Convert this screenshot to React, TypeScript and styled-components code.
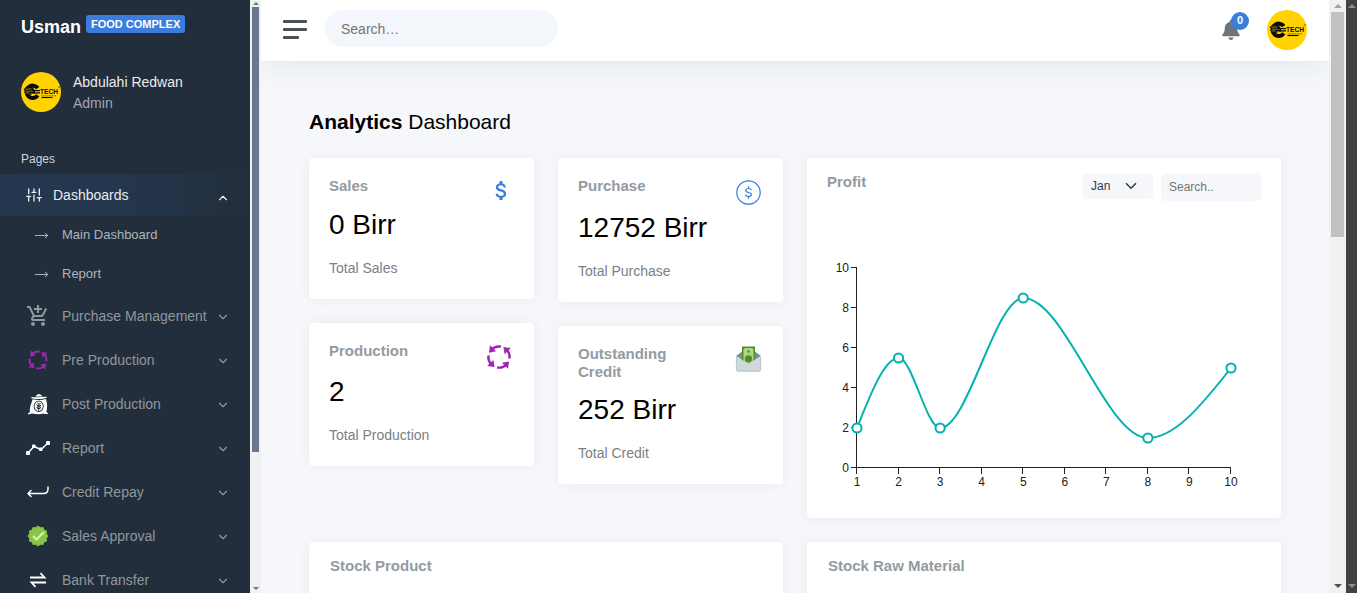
import React from "react";
import styled, { createGlobalStyle } from "styled-components";
import { FiSliders, FiChevronDown, FiChevronUp } from "react-icons/fi";
import { MdAddShoppingCart, MdAttachMoney } from "react-icons/md";
import { FcProcess, FcApproval } from "react-icons/fc";
import { GiFlour } from "react-icons/gi";
import { FaBell } from "react-icons/fa";

const GlobalStyle = createGlobalStyle`
  *, *::before, *::after { box-sizing: border-box; }
  body {
    margin: 0;
    background: #f5f7fb;
    font-family: "Liberation Sans", Arial, sans-serif;
    font-size: 14px;
    line-height: 21px;
    color: #000;
  }
  h1, h2, p, ul { margin: 0; padding: 0; }
  ul { list-style: none; }
  button, input, select { font-family: inherit; margin: 0; border: 0; }
  a { text-decoration: none; color: inherit; }
`;

const Page = styled.div`
  display: flex;
  height: 100vh;
  overflow: hidden;
`;

const Sidebar = styled.aside`
  flex: 0 0 250px;
  overflow: hidden;
  background: #222e3c;
`;

const Brand = styled.a`
  display: flex;
  align-items: flex-start;
  gap: 5px;
  padding: 15px 21px 0;
  height: 51px;
`;

const BrandName = styled.span`
  color: #fff;
  font-size: 18px;
  font-weight: 700;
  line-height: 24px;
`;

const BrandBadge = styled.span`
  padding: 0 5px;
  border-radius: 3px;
  background: #3b7ddd;
  color: #fff;
  font-size: 11px;
  font-weight: 700;
  line-height: 18px;
`;

const User = styled.div`
  display: flex;
  align-items: flex-start;
  gap: 12px;
  padding: 21px;
`;

const UserName = styled.a`
  display: block;
  color: #e9ecef;
`;

const UserRole = styled.span`
  color: #a1a7af;
`;

const NavHeading = styled.p`
  padding: 14px 21px 4px;
  color: #ced4da;
  font-size: 12px;
`;

const NavButton = styled.button<{ $active?: boolean }>`
  display: flex;
  align-items: center;
  gap: ${(p) => (p.$active ? 11 : 12)}px;
  width: 100%;
  height: ${(p) => (p.$active ? 42 : 44)}px;
  padding: 0 20px 0 26px;
  background: ${(p) =>
    p.$active
      ? "linear-gradient(90deg, rgba(59,125,221,.12), rgba(59,125,221,.1) 50%, transparent)"
      : "transparent"};
  color: ${(p) => (p.$active ? "#e9ecef" : "#90979d")};
  font-size: 14px;
  line-height: 21px;
  text-align: left;
  cursor: pointer;
`;

const NavIcon = styled.span<{ $color?: string }>`
  display: flex;
  flex: none;
  color: ${(p) => p.$color ?? "#fff"};
`;

const NavLabel = styled.span`
  flex: 1;
  min-width: 0;
  white-space: nowrap;
`;

const NavChevron = styled.span<{ $open?: boolean }>`
  display: flex;
  flex: none;
  margin-left: -4px;
  padding-top: ${(p) => (p.$open ? 6 : 2)}px;
`;

const SubLink = styled.a`
  display: flex;
  align-items: center;
  gap: 13px;
  padding: 8px 21px 10px 35px;
  color: #adb5bd;
  font-size: 13px;
`;

const Track = styled.div<{ $width: number; $bg: string }>`
  display: flex;
  flex: 0 0 ${(p) => p.$width}px;
  flex-direction: column;
  align-items: center;
  background: ${(p) => p.$bg};
`;

const Thumb = styled.div<{ $share: number; $bg: string }>`
  align-self: stretch;
  flex: 0 0 ${(p) => p.$share}%;
  margin: 0 2px;
  background: ${(p) => p.$bg};
`;

const TrackArrow = styled.span<{ $down?: boolean; $size: number; $pad: number; $color: string }>`
  width: 0;
  height: 0;
  margin: ${(p) => (p.$down ? `auto 0 ${p.$pad}px` : `${p.$pad}px 0 ${p.$pad}px`)};
  border: ${(p) => p.$size}px solid transparent;
  border-${(p) => (p.$down ? "bottom" : "top")}-width: 0;
  border-${(p) => (p.$down ? "top" : "bottom")}-color: ${(p) => p.$color};
`;

const Main = styled.div`
  flex: 1;
  min-width: 0;
  overflow-x: hidden;
  overflow-y: auto;
  scrollbar-width: none;
`;

const TopBar = styled.header`
  display: flex;
  align-items: center;
  height: 61px;
  padding: 0 22px;
  background: #fff;
  box-shadow: 0 0 32px rgba(33, 37, 41, 0.1);
`;

const MenuButton = styled.button`
  display: flex;
  flex-direction: column;
  gap: 5px;
  width: 24px;
  margin: 0 18px 3px 0;
  padding: 0;
  background: none;
  cursor: pointer;
`;

const MenuBar = styled.span<{ $short?: boolean }>`
  width: ${(p) => (p.$short ? 16 : 24)}px;
  height: 3px;
  border-radius: 1px;
  background: #495057;
`;

const TopSearch = styled.input`
  width: 233px;
  height: 37px;
  margin-bottom: 4px;
  padding: 0 16px;
  border-radius: 19px;
  background: #f3f6fb;
  font-size: 14px;

  &::placeholder { color: #757575; opacity: 1; }
`;

const TopActions = styled.div`
  display: flex;
  align-items: center;
  gap: 26px;
  margin: 0 0 2px auto;
`;

const BellButton = styled.button`
  position: relative;
  display: flex;
  padding: 0;
  background: none;
  color: #6c757d;
  cursor: pointer;
`;

const BellCount = styled.span`
  position: absolute;
  top: -8px;
  right: -8px;
  width: 18px;
  height: 18px;
  border-radius: 50%;
  background: #3b7ddd;
  color: #fff;
  font-size: 11px;
  font-weight: 700;
  line-height: 17px;
  text-align: center;
`;

const Content = styled.main`
  padding: 48px;
`;

const PageTitle = styled.h1`
  margin-bottom: 24px;
  font-size: 21px;
  font-weight: 400;
  line-height: 25px;
`;

const Columns = styled.div`
  display: grid;
  grid-template-columns: 1fr 1fr;
  gap: 24px;
  align-items: start;
`;

const Stack = styled.div`
  display: grid;
  gap: 24px;
`;

const Card = styled.section`
  min-width: 0;
  padding: 19px 20px 20px;
  border-radius: 4px;
  background: #fff;
  box-shadow: 0 0 14px rgba(33, 37, 41, 0.05);
`;

const ChartCard = styled(Card)`
  padding: 0;
`;

const StockCard = styled(Card)`
  min-height: 300px;
  padding: 15px 21px;
`;

const CardTitle = styled.h2`
  padding-bottom: 8px;
  color: #939ba2;
  font-size: 15px;
  font-weight: 700;
  line-height: 18px;
`;

const StatHead = styled.div`
  display: flex;
  justify-content: space-between;
  gap: 24px;
`;

const StatIcon = styled.span<{ $height: number }>`
  display: flex;
  align-items: center;
  flex: none;
  height: ${(p) => p.$height}px;
`;

const StatValue = styled.p`
  margin: 4px 0 16px;
  font-size: 28px;
  line-height: 34px;
`;

const StatCaption = styled.p`
  color: #7b8086;
`;

const ChartHead = styled.div`
  display: flex;
  align-items: flex-start;
  gap: 8px;
  height: 60px;
  padding: 15px 20px 0;
`;

const ChartTitle = styled(CardTitle)`
  flex: 1;
`;

const SelectBox = styled.div`
  position: relative;
  margin-top: 1px;
`;

const MonthSelect = styled.select`
  appearance: none;
  display: block;
  width: 70px;
  height: 25px;
  padding: 0 8px 2px;
  border-radius: 3px;
  background: #f5f7fb;
  color: #343a40;
  font-size: 12px;
`;

const SelectArrow = styled.svg`
  position: absolute;
  top: 8px;
  right: 16px;
  pointer-events: none;
`;

const ChartSearch = styled.input`
  width: 100px;
  height: 27px;
  margin-top: 1px;
  padding: 0 8px 2px;
  border-radius: 4px;
  background: #f5f7fb;
  font-size: 12px;

  &::placeholder { color: #757575; opacity: 1; }
`;

const ChartSvg = styled.svg`
  display: block;
  width: 100%;
  height: auto;

  text {
    font-family: "Liberation Sans", Arial, sans-serif;
    font-size: 12px;
    fill: #212121;
  }
`;

function Logo() {
  return (
    <svg width="40" height="40" viewBox="0 0 40 40" role="img" aria-label="E-Tech">
      <circle cx="20" cy="20" r="20" fill="#ffd200" />
      <path
        d="M16.800 16.200A6.200 6.200 0 1 0 16.800 23.400"
        fill="none"
        stroke="#0b0b05"
        strokeWidth="4"
      />
      <path d="M2.500 17.500L5.500 14.500L11 14.500L14 18.500V21.500H9.500L11 23L6 22L3 20.500L4.500 19Z" fill="#0b0b05" />
      <path d="M4.500 17.300L10.500 16.800M5 19.200H13M4.500 20.800L8.500 21.200" stroke="#ffd200" strokeWidth=".6" />
      <path d="M11 18.600H19M12 20.900H19" stroke="#0b0b05" strokeWidth="1.300" />
      <text
        x="19"
        y="22.400"
        fontFamily="Liberation Sans, Arial, sans-serif"
        fontSize="6.600"
        fontWeight="700"
        fill="#0b0b05"
      >
        TECH
      </text>
      <path d="M20.500 23.800H35" stroke="#0b0b05" strokeWidth=".6" strokeDasharray="1 .5" />
      <path d="M20.500 25.500H31.500" stroke="#0b0b05" strokeWidth="1.100" />
      <circle cx="38" cy="15" r=".8" fill="none" stroke="#6b5a00" strokeWidth=".5" />
    </svg>
  );
}

function SubArrow() {
  return (
    <svg width="14" height="14" viewBox="0 0 14 14" fill="none" stroke="#adb5bd" aria-hidden="true">
      <path d="M0 7.500H12.500M10 5L12.800 7.500L10 10" />
    </svg>
  );
}

function TrendIcon() {
  return (
    <svg width="24" height="24" viewBox="0 0 24 24" fill="none">
      <path d="M2 17L8 10.500L15 13.500L22 7" stroke="#fff" strokeWidth="1.500" />
      <g fill="#fff">
        <rect x="0" y="15" width="4" height="4" rx="1" />
        <rect x="6" y="8.500" width="3.500" height="3.500" rx="1" />
        <rect x="13" y="11.500" width="3.500" height="3.500" rx="1" />
        <rect x="20" y="5" width="4" height="4" rx="1" />
      </g>
    </svg>
  );
}

function ReturnIcon() {
  return (
    <svg width="24" height="24" viewBox="0 0 24 24" fill="none" stroke="#fff" strokeWidth="1.500" strokeLinecap="round" strokeLinejoin="round">
      <path d="M22 7V9C22 11.500 20.500 13.500 17.500 13.500H2M5 10.500L2 13.500L5 16.500" />
    </svg>
  );
}

function TransferIcon() {
  return (
    <svg width="24" height="24" viewBox="0 0 24 24" fill="none" stroke="#fff" strokeWidth="1.800">
      <path d="M4 9.500H18.500L14.500 5.200M20 14.500H5.500L9.500 18.800" />
    </svg>
  );
}

function CoinIcon() {
  return (
    <svg width="30" height="30" viewBox="0 0 30 30" fill="none" stroke="#3b7ddd" strokeWidth="1.200">
      <circle cx="15.500" cy="15.500" r="11.700" />
      <path
        transform="translate(.5 .5)"
        d="M15 8.800V11M15 19V21.200M17.900 12.600C17.700 11.600 16.700 11 15.200 11C13.400 11 12.300 11.800 12.300 13C12.300 14.200 13.200 14.600 15 15C16.900 15.400 17.900 15.900 17.900 17.100C17.900 18.300 16.800 19.100 15 19.100C13.300 19.100 12.200 18.400 12 17.200"
      />
    </svg>
  );
}

function CashEnvelopeIcon() {
  return (
    <svg width="30" height="30" viewBox="0 0 30 30">
      <path d="M3 12L9 7.500H22L28 12L15.500 20Z" fill="#78909c" />
      <path d="M9 2.500H22V19H9Z" fill="#558b2f" />
      <path d="M12 4H19L20.500 5.500V17.500L15.500 20.500L10.500 17.500V5.500Z" fill="#aed581" />
      <circle cx="15.500" cy="7.500" r="1.300" fill="#558b2f" />
      <circle cx="15.500" cy="14.800" r="3.600" fill="#558b2f" />
      <path d="M3 12L15.500 20L28 12V25.500A2 2 0 0 1 26 27.500H5A2 2 0 0 1 3 25.500Z" fill="#cfd8dc" />
      <path d="M3.400 12.500V25.500A1.600 1.600 0 0 0 5 27.100H26A1.600 1.600 0 0 0 27.600 25.500V12.500" fill="none" stroke="#b0bec5" strokeWidth=".8" />
    </svg>
  );
}

type Point = [number, number];

const profit: Point[] = [[1, 2], [2, 5.5], [3, 2], [5, 8.5], [8, 1.5], [10, 5]];
const xTicks = [1, 2, 3, 4, 5, 6, 7, 8, 9, 10];
const yTicks = [0, 2, 4, 6, 8, 10];
const sx = (v: number) => 50 + ((v - 1) * 374) / 9;
const sy = (v: number) => 250 - v * 20;

/* Monotone cubic interpolation through the points. */
function monotonePath(points: Point[]) {
  const n = points.length;
  const slope = points.slice(1).map((p, i) => (p[1] - points[i][1]) / (p[0] - points[i][0]));
  const tangent = points.map((_, i) => {
    if (i === 0 || i === n - 1) return 0;
    const h0 = points[i][0] - points[i - 1][0];
    const h1 = points[i + 1][0] - points[i][0];
    const s0 = slope[i - 1];
    const s1 = slope[i];
    const p = (s0 * h1 + s1 * h0) / (h0 + h1);
    return (Math.sign(s0) + Math.sign(s1)) * Math.min(Math.abs(s0), Math.abs(s1), 0.5 * Math.abs(p)) || 0;
  });
  tangent[0] = (3 * slope[0] - tangent[1]) / 2;
  tangent[n - 1] = (3 * slope[n - 2] - tangent[n - 2]) / 2;
  return points.slice(1).reduce((d, [x1, y1], i) => {
    const [x0, y0] = points[i];
    const dx = (x1 - x0) / 3;
    return `${d}C${x0 + dx},${y0 + dx * tangent[i]},${x1 - dx},${y1 - dx * tangent[i + 1]},${x1},${y1}`;
  }, `M${points[0][0]},${points[0][1]}`);
}

function ProfitChart() {
  const points = profit.map(([x, y]): Point => [sx(x), sy(y)]);
  return (
    <ChartSvg viewBox="0 0 474 300" role="img" aria-label="Profit by period">
      <g stroke="#212121" shapeRendering="crispEdges" transform="translate(-.5 -.5)">
        <path d="M50 50V250M50 250H424" fill="none" />
        {yTicks.map((t) => <line key={t} x1="44" x2="50" y1={sy(t)} y2={sy(t)} />)}
        {xTicks.map((t) => <line key={t} x1={sx(t)} x2={sx(t)} y1="250" y2="256" />)}
      </g>
      {yTicks.map((t) => <text key={t} x="42" y={sy(t) + 4} textAnchor="end">{t}</text>)}
      {xTicks.map((t) => <text key={t} x={sx(t)} y="268" textAnchor="middle">{t}</text>)}
      <path d={monotonePath(points)} fill="none" stroke="#02b2af" strokeWidth="2" />
      {points.map(([x, y]) => (
        <circle key={x} cx={x} cy={y} r="4.600" fill="#fff" stroke="#02b2af" strokeWidth="2" />
      ))}
    </ChartSvg>
  );
}

const navItems = [
  { label: "Purchase Management", icon: <MdAddShoppingCart size={24} />, color: "#90979d" },
  { label: "Pre Production", icon: <FcProcess size={24} /> },
  { label: "Post Production", icon: <GiFlour size={24} /> },
  { label: "Report", icon: <TrendIcon /> },
  { label: "Credit Repay", icon: <ReturnIcon /> },
  { label: "Sales Approval", icon: <FcApproval size={24} /> },
  { label: "Bank Transfer", icon: <TransferIcon /> },
];

interface StatProps {
  title: string;
  value: string;
  caption: string;
  icon: React.ReactNode;
  iconHeight: number;
}

function Stat({ title, value, caption, icon, iconHeight }: StatProps) {
  return (
    <Card>
      <StatHead>
        <CardTitle>{title}</CardTitle>
        <StatIcon $height={iconHeight}>{icon}</StatIcon>
      </StatHead>
      <StatValue>{value}</StatValue>
      <StatCaption>{caption}</StatCaption>
    </Card>
  );
}

export default function App() {
  return (
    <Page>
      <GlobalStyle />
      <Sidebar>
        <Brand href="#">
          <BrandName>Usman</BrandName>
          <BrandBadge>FOOD COMPLEX</BrandBadge>
        </Brand>
        <User>
          <Logo />
          <div>
            <UserName href="#">Abdulahi Redwan</UserName>
            <UserRole>Admin</UserRole>
          </div>
        </User>
        <nav>
          <NavHeading>Pages</NavHeading>
          <NavButton $active aria-expanded="true">
            <NavIcon $color="#e9ecef"><FiSliders size={16} strokeWidth={2} /></NavIcon>
            <NavLabel>Dashboards</NavLabel>
            <NavChevron $open><FiChevronUp size={14} /></NavChevron>
          </NavButton>
          <ul>
            <li><SubLink href="#"><SubArrow />Main Dashboard</SubLink></li>
            <li><SubLink href="#"><SubArrow />Report</SubLink></li>
          </ul>
          {navItems.map((item) => (
            <NavButton key={item.label} aria-expanded="false">
              <NavIcon $color={item.color}>{item.icon}</NavIcon>
              <NavLabel>{item.label}</NavLabel>
              <NavChevron><FiChevronDown size={14} /></NavChevron>
            </NavButton>
          ))}
        </nav>
      </Sidebar>
      <Track $width={11} $bg="#f1f1f1" aria-hidden="true">
        <TrackArrow $size={3} $pad={2} $color="#68788f" />
        <Thumb $share={75} $bg="#68788f" />
        <TrackArrow $down $size={3} $pad={3} $color="#68788f" />
      </Track>
      <Main>
        <TopBar>
          <MenuButton aria-label="Toggle sidebar">
            <MenuBar />
            <MenuBar />
            <MenuBar $short />
          </MenuButton>
          <TopSearch type="text" placeholder="Search…" aria-label="Search" />
          <TopActions>
            <BellButton aria-label="Notifications">
              <FaBell size={20} />
              <BellCount>0</BellCount>
            </BellButton>
            <Logo />
          </TopActions>
        </TopBar>
        <Content>
          <PageTitle><strong>Analytics</strong> Dashboard</PageTitle>
          <Columns>
            <Columns>
              <Stack>
                <Stat title="Sales" value="0 Birr" caption="Total Sales" iconHeight={27} icon={<MdAttachMoney size={25} color="#3b7ddd" />} />
                <Stat title="Production" value="2" caption="Total Production" iconHeight={29} icon={<FcProcess size={30} />} />
              </Stack>
              <Stack>
                <Stat title="Purchase" value="12752 Birr" caption="Total Purchase" iconHeight={30} icon={<CoinIcon />} />
                <Stat title="Outstanding Credit" value="252 Birr" caption="Total Credit" iconHeight={27} icon={<CashEnvelopeIcon />} />
              </Stack>
            </Columns>
            <ChartCard>
              <ChartHead>
                <ChartTitle>Profit</ChartTitle>
                <SelectBox>
                  <MonthSelect aria-label="Month" defaultValue="Jan">
                    <option>Jan</option>
                    <option>Feb</option>
                    <option>Mar</option>
                  </MonthSelect>
                  <SelectArrow width="12" height="8" viewBox="0 0 12 8" fill="none" stroke="#343a40" strokeWidth="1.500">
                    <path d="M1 1.200L6 6.200L11 1.200" />
                  </SelectArrow>
                </SelectBox>
                <ChartSearch type="text" placeholder="Search.." aria-label="Search profit" />
              </ChartHead>
              <ProfitChart />
            </ChartCard>
            <StockCard><CardTitle>Stock Product</CardTitle></StockCard>
            <StockCard><CardTitle>Stock Raw Material</CardTitle></StockCard>
          </Columns>
        </Content>
      </Main>
      <Track $width={17} $bg="#f1f1f1" aria-hidden="true">
        <TrackArrow $size={4} $pad={4} $color="#a3a3a3" />
        <Thumb $share={38} $bg="#c1c1c1" />
        <TrackArrow $down $size={4} $pad={5} $color="#505050" />
      </Track>
      <Track $width={11} $bg="#424242" aria-hidden="true">
        <TrackArrow $size={4} $pad={4} $color="#8a8a8a" />
        <TrackArrow $down $size={4} $pad={5} $color="#8a8a8a" />
      </Track>
    </Page>
  );
}
